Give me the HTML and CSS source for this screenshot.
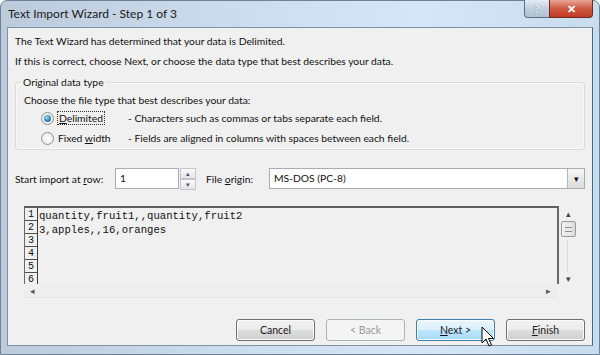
FILE: index.html
```html
<!DOCTYPE html>
<html lang="en">
<head>
    <meta charset="UTF-8">
    <title>Text Import Wizard - Step 1 of 3</title>
    <link rel="stylesheet" href="styles.css">
</head>
<body>
    <div class="window">
        <div class="titlebar">
            <span class="title">Text Import Wizard - Step 1 of 3</span>
            <div class="caption">
                <span class="cap-btn help">?</span>
                <span class="cap-btn close">&#x2715;</span>
            </div>
        </div>

        <div class="client">
            <p class="line first">The Text Wizard has determined that your data is Delimited.</p>
            <p class="line">If this is correct, choose Next, or choose the data type that best describes your data.</p>

            <!-- group box -->
            <fieldset class="group">
                <legend>Original data type</legend>
                <p class="choose">Choose the file type that best describes your data:</p>
                <div class="option">
                    <span class="radio checked"></span>
                    <span class="opt-label"><span class="focus"><u>D</u>elimited</span></span>
                    <span class="opt-desc">- Characters such as commas or tabs separate each field.</span>
                </div>
                <div class="option">
                    <span class="radio"></span>
                    <span class="opt-label">Fixed <u>w</u>idth</span>
                    <span class="opt-desc">- Fields are aligned in columns with spaces between each field.</span>
                </div>
            </fieldset>

            <div class="import-row">
                <label class="row-label">Start import at <u>r</u>ow:</label>
                <div class="spin">
                    <span class="spin-value">1</span>
                    <div class="spin-btns">
                        <span class="spin-btn">&#x25B4;</span>
                        <span class="spin-btn">&#x25BE;</span>
                    </div>
                </div>
                <label class="origin-label">File <u>o</u>rigin:</label>
                <div class="select">
                    <span class="select-value">MS-DOS (PC-8)</span>
                    <span class="select-btn">&#x25BE;</span>
                </div>
            </div>

            <!-- preview -->
            <div class="preview">
                <div class="preview-main">
                    <div class="preview-box">
                        <div class="ruler">
                            <span>1</span><span>2</span><span>3</span><span>4</span><span>5</span><span>6</span>
                        </div>
                        <div class="data">
                            <div>quantity,fruit1,,quantity,fruit2</div>
                            <div>3,apples,,16,oranges</div>
                        </div>
                    </div>
                    <div class="vscroll">
                        <span class="arrow">&#x25B4;</span>
                        <span class="thumb"></span>
                        <span class="track"></span>
                        <span class="arrow">&#x25BE;</span>
                    </div>
                </div>
                <div class="hscroll">
                    <span class="arrow">&#x25C2;</span>
                    <span class="arrow">&#x25B8;</span>
                </div>
            </div>

            <div class="buttons">
                <button class="btn">Cancel</button>
                <button class="btn disabled">&lt; Back</button>
                <button class="btn hot"><u>N</u>ext &gt;</button>
                <button class="btn"><u>F</u>inish</button>
            </div>

            <svg class="cursor" width="14" height="22" viewBox="0 0 14 22">
                <path d="M1 1 L1 17 L5 13 L8 20 L10.5 19 L7.5 12.5 L12.5 12.5 Z" fill="#fff" stroke="#000" stroke-width="1" stroke-linejoin="miter"/>
            </svg>
        </div>
    </div>
</body>
</html>
```

FILE: styles.css
```css
body {
    margin: 0;
    font-family: Lato, "Noto Sans", sans-serif;
    font-size: 10.3px;
    color: #111;
    background: #fff;
}
.window {
    width: 600px;
    height: 355px;
    box-sizing: border-box;
    border: 1px solid #6f8196;
    border-radius: 7px 7px 0 0;
    background: linear-gradient(90deg, #bccbdb 0%, #cadbec 35%, #d6e6f6 70%, #c8dcee 100%);
    display: flex;
    flex-direction: column;
    padding: 0 6px 8px 6px;
}
.titlebar {
    height: 26px;
    display: flex;
    align-items: flex-start;
    flex-shrink: 0;
}
.title {
    font-size: 12px;
    color: #1a1a1a;
    padding: 5px 0 0 1px;
}
.caption {
    margin-left: auto;
    display: flex;
    margin-top: -1px;
}
.cap-btn {
    height: 17px;
    display: flex;
    align-items: center;
    justify-content: center;
    border: 1px solid #5c6e82;
    border-top: none;
    color: #fff;
    font-weight: bold;
}
.help {
    width: 24px;
    border-radius: 0 0 0 4px;
    border-right: none;
    background: linear-gradient(#e2ebf4, #c0cfdd 50%, #b0c2d3);
    color: #eef3f8;
    font-size: 12px;
    text-shadow: 0 0 1px #5a6a7a;
}
.close {
    width: 42px;
    border-radius: 0 0 4px 0;
    background: linear-gradient(#e8a597, #cf5a45 50%, #c23a24);
    font-size: 11px;
    border-color: #6d2a22;
}
.client {
    flex: 1;
    position: relative;
    background: #f0f0f0;
    border: 1px solid #7f93a8;
    border-right-color: #3f6f7f;
    padding: 0 7px 0 7px;
    display: flex;
    flex-direction: column;
}
.line {
    margin: 0;
    height: 20px;
    line-height: 20px;
}
.line.first {
    margin-top: 3px;
}
.group {
    margin: 5px 0 0 0;
    padding: 0 8px 1px 8px;
    border: 1px solid #dcdcdc;
    border-radius: 3px;
    box-shadow: inset 0 0 0 1px #fafafa;
}
.group legend {
    padding: 0 2px;
    margin-left: -3px;
    line-height: 12px;
}
.choose {
    margin: 4px 0 0 0;
    line-height: 16px;
}
.option {
    display: flex;
    align-items: center;
    height: 20px;
    padding-left: 17px;
}
.radio {
    width: 11px;
    height: 11px;
    border: 1px solid #8e8f8f;
    border-radius: 50%;
    background: radial-gradient(circle at 50% 50%, #ffffff, #e4e4e4);
    position: relative;
    margin-right: 3px;
}
.radio.checked::after {
    content: "";
    position: absolute;
    left: 2px;
    top: 2px;
    width: 7px;
    height: 7px;
    border-radius: 50%;
    background: radial-gradient(circle at 40% 35%, #9fd9f8, #1d6fa8 70%);
}
.opt-label {
    width: 71px;
    padding-left: 1px;
    box-sizing: border-box;
}
.focus {
    outline: 1px dotted #333;
    padding: 0 1px;
}
.import-row {
    display: flex;
    align-items: center;
    margin-top: 18px;
    height: 21px;
}
.row-label {
    width: 100px;
}
.spin {
    display: flex;
    height: 21px;
}
.spin-value {
    width: 64px;
    box-sizing: border-box;
    border: 1px solid #abadb3;
    background: #fff;
    padding: 2px 4px;
    line-height: 15px;
}
.spin-btns {
    display: flex;
    flex-direction: column;
    width: 16px;
    margin-left: 1px;
}
.spin-btn {
    flex: 1;
    font-size: 7px;
    line-height: 9px;
    text-align: center;
    color: #3d5a7a;
    border: 1px solid #c4c8cc;
    background: linear-gradient(#fafafa, #e6e6e6);
}
.origin-label {
    margin-left: 10px;
    width: 63px;
}
.select {
    display: flex;
    flex: 1;
    height: 21px;
    box-sizing: border-box;
    border: 1px solid #a9acb0;
    background: #fff;
}
.select-value {
    flex: 1;
    padding: 0 4px;
    line-height: 19px;
}
.select-btn {
    width: 16px;
    border-left: 1px solid #b5b8bc;
    background: linear-gradient(#f6f6f6, #dcdcdc);
    font-size: 9px;
    text-align: center;
    line-height: 19px;
}
.preview {
    margin: 17px 10px 0 9px;
}
.preview-main {
    display: flex;
}
.preview-box {
    flex: 1;
    display: flex;
    height: 76px;
    overflow: hidden;
    border-top: 2px solid #5d5d5d;
    border-left: 1px solid #6a6a6a;
    border-right: 2px solid #6a6a6a;
    background: #f0f0f0;
    font-family: "Liberation Mono", monospace;
    font-size: 10.6px;
}
.ruler {
    width: 12px;
    border-right: 1px solid #3c3c3c;
    display: flex;
    flex-direction: column;
    flex-shrink: 0;
}
.ruler span {
    height: 12px;
    line-height: 14px;
    border-bottom: 1px solid #4d4d4d;
    text-align: center;
    font-size: 10px;
    flex-shrink: 0;
}
.data {
    padding-left: 1px;
    padding-top: 1px;
}
.data div {
    height: 14px;
    line-height: 14px;
}
.vscroll {
    width: 14px;
    margin-left: 2px;
    display: flex;
    flex-direction: column;
    align-items: center;
    padding-top: 3px;
}
.vscroll .arrow {
    font-size: 9px;
    line-height: 10px;
    color: #444;
}
.thumb {
    width: 13px;
    height: 14px;
    margin-top: 2px;
    border: 1px solid #9a9a9a;
    border-radius: 2px;
    background: repeating-linear-gradient(#e9e9e9 0 3px, #8c8c8c 3px 4px) 3px 2px / 7px 10px no-repeat, linear-gradient(90deg, #f2f2f2, #dadada);
}
.track {
    flex: 1;
    width: 1px;
    border-left: 1px dotted #c8c8c8;
    margin: 3px 0;
}
.hscroll {
    height: 13px;
    display: flex;
    justify-content: space-between;
    padding: 0 6px;
    margin-right: 18px;
    border-bottom: 1px solid #e6e6e6;
    background: #eeeeee;
}
.hscroll .arrow {
    font-size: 9px;
    line-height: 13px;
    color: #555;
}
.buttons {
    display: flex;
    justify-content: flex-end;
    gap: 11px;
    margin-top: auto;
    margin-bottom: 4px;
}
.btn {
    width: 79px;
    height: 22px;
    font-family: inherit;
    font-size: 10.5px;
    color: #1b1b1b;
    border: 1px solid #707070;
    border-radius: 3px;
    background: linear-gradient(#f2f2f2 0%, #ebebeb 50%, #dddddd 51%, #cfcfcf 100%);
    box-shadow: inset 0 0 0 1px #fbfbfb;
    padding: 0;
}
.btn.disabled {
    border-color: #adb2b5;
    background: #f4f4f4;
    color: #9a9a9a;
    box-shadow: none;
}
.btn.hot {
    border-color: #3c7fb1;
    background: linear-gradient(#eaf6fd 0%, #d9f0fc 50%, #bee6fd 51%, #a7d9f5 100%);
}
.cursor {
    position: absolute;
    left: 473px;
    top: 298px;
}
```
